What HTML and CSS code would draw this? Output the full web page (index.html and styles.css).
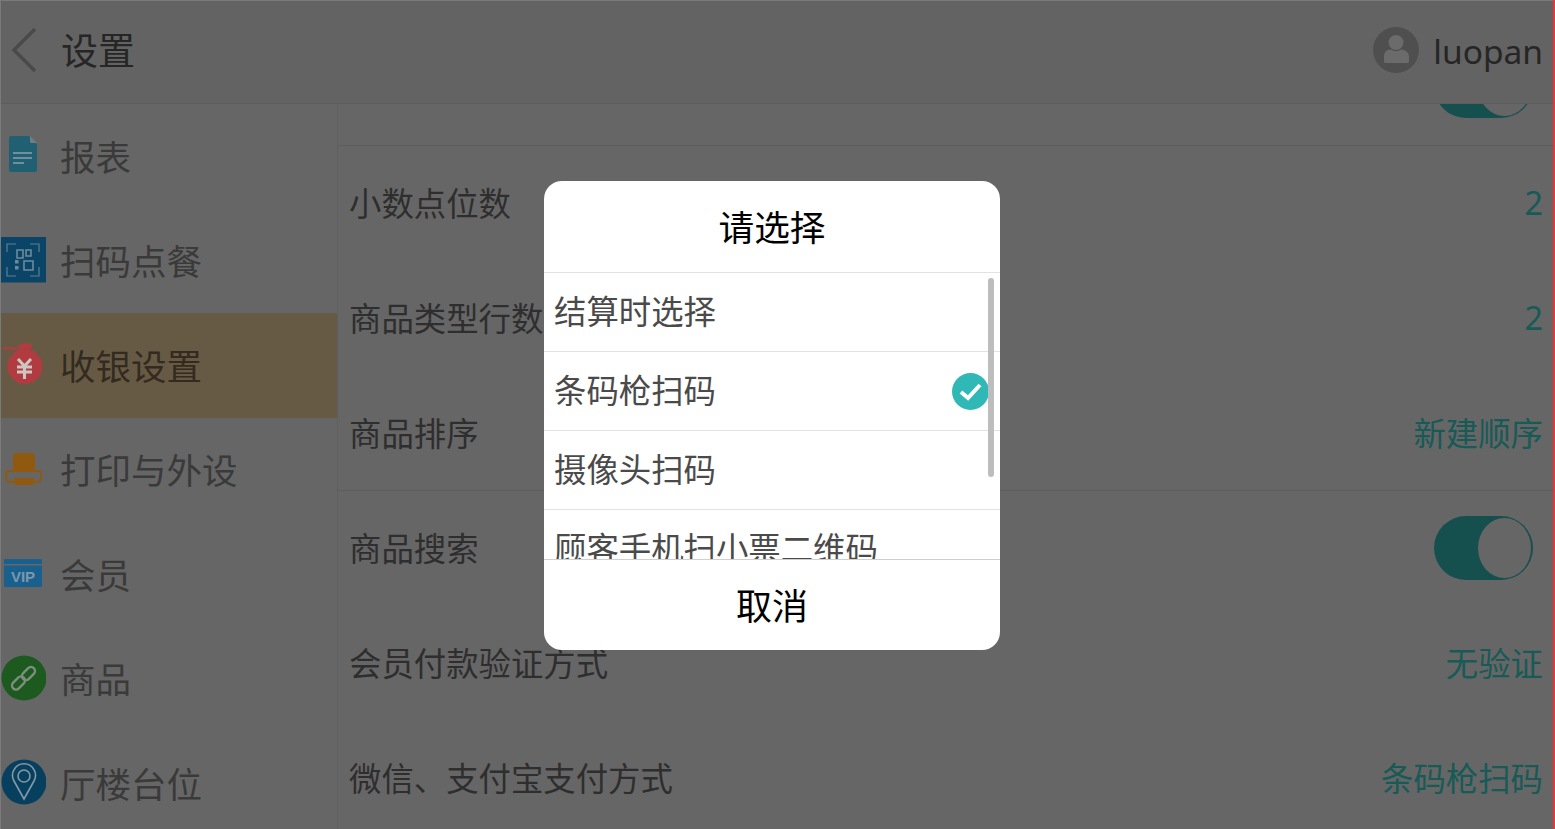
FILE: index.html
```html
<!DOCTYPE html>
<html lang="zh-CN">
<head>
    <meta charset="UTF-8">
    <meta name="viewport" content="width=device-width, initial-scale=1.0">
    <title>设置</title>
    <link rel="stylesheet" href="styles.css">
</head>
<body>
    <div class="app">
        <!-- Top bar -->
        <header class="topbar">
            <svg class="back-icon" viewBox="0 0 26 46"><path d="M24 2 L3 23 L24 44" fill="none" stroke="#4a4a4a" stroke-width="3.4"/></svg>
            <div class="topbar-title">设置</div>
            <svg class="avatar" viewBox="0 0 46 46">
                <circle cx="23" cy="23" r="23" fill="#4f4f4f"/>
                <circle cx="23" cy="15.5" r="7.5" fill="#6b6b6b"/>
                <path d="M11 35 V29 Q11 23 18 22.5 Q23 26 28 22.5 Q35 23 36 29 V35 Q36 36 34 36 H13 Q11 36 11 35 Z" fill="#6b6b6b"/>
            </svg>
            <div class="topbar-user">luopan</div>
        </header>

        <div class="body-row">
            <!-- Left menu -->
            <nav class="sidebar">
                <div class="menu-item">
                    <svg class="menu-icon" viewBox="0 0 46 46">
                        <path d="M11 4 H29 L37 12 V38 Q37 40 35 40 H11 Q9 40 9 38 V6 Q9 4 11 4 Z" fill="#215f72"/>
                        <path d="M30 4 L37 11 H31 Q30 11 30 10 Z" fill="#6b7f86"/>
                        <path d="M13 21 H32 M13 26 H32 M13 31 H24" stroke="#6f8f9c" stroke-width="1.8"/>
                    </svg>
                    <span>报表</span>
                </div>
                <div class="menu-item">
                    <svg class="menu-icon" viewBox="0 0 46 46">
                        <rect x="1" y="0" width="45" height="45.5" fill="#0a4568"/>
                        <path d="M7 15 V7 H16 M30 7 H39 V15 M39 30 V39 H30 M16 39 H7 V30" fill="none" stroke="#5f7f90" stroke-width="1.2"/>
                        <path d="M17 13 H23 V21 H17 Z M26 13 H31 V19 H26 Z M24 24 H33 V33 H24 Z" fill="none" stroke="#6f8a9a" stroke-width="1.6"/>
                        <rect x="15" y="23" width="3.5" height="3.5" fill="#6f8a9a"/>
                        <rect x="15" y="29" width="3.5" height="3.5" fill="#6f8a9a"/>
                    </svg>
                    <span>扫码点餐</span>
                </div>
                <div class="menu-item menu-item-active">
                    <svg class="menu-icon" viewBox="0 0 46 46">
                        <path d="M18 4 Q25 1 32 3 Q33 6 29 9 H20 Q18 7 18 4 Z" fill="#b03c42"/>
                        <path d="M19 8 Q10 4 2 7 Q3 9 5 8.5 Q11 7 17 10 Z" fill="#b03c42"/>
                        <circle cx="25" cy="25.5" r="17.5" fill="#b03c42"/>
                        <path d="M18 18 L24.5 25 L31 18 M17 26 H32 M17 31 H32 M24.5 25 V38" fill="none" stroke="#cfc6c0" stroke-width="3"/>
                    </svg>
                    <span>收银设置</span>
                </div>
                <div class="menu-item">
                    <svg class="menu-icon" viewBox="0 0 46 46">
                        <path d="M13 11 Q13 7 17 7 H31 Q35 7 35 11 V24 H13 Z" fill="#8f5a0f"/>
                        <path d="M9 25 H39 Q41 25 41 28 V31 Q41 36 37 36 H10 Q6 36 6 31 V28 Q6 25 9 25 Z" fill="none" stroke="#8f5a0f" stroke-width="2"/>
                        <path d="M14 32 H34 V37 Q34 39 32 39 H16 Q14 39 14 37 Z" fill="#8f5a0f"/>
                    </svg>
                    <span>打印与外设</span>
                </div>
                <div class="menu-item">
                    <svg class="menu-icon" viewBox="0 0 46 46">
                        <path d="M4 10 Q4 9 6 9 H41 Q42 9 42 10 V14 H4 Z" fill="#19608f"/>
                        <path d="M4 15.5 H42 V36 Q42 37 41 37 H5 Q4 37 4 36 Z" fill="#19608f"/>
                        <text x="23" y="32" class="vip-text">VIP</text>
                    </svg>
                    <span>会员</span>
                </div>
                <div class="menu-item">
                    <svg class="menu-icon" viewBox="0 0 46 46">
                        <circle cx="24" cy="23" r="22.5" fill="#1d5a1f"/>
                        <g fill="none" stroke="#7d8e7d" stroke-width="2.4">
                            <rect x="11" y="24" width="15" height="8" rx="4" transform="rotate(-45 18.5 28)"/>
                            <rect x="21" y="14.5" width="15" height="8" rx="4" transform="rotate(-45 28.5 18.5)"/>
                        </g>
                    </svg>
                    <span>商品</span>
                </div>
                <div class="menu-item">
                    <svg class="menu-icon" viewBox="0 0 46 46">
                        <circle cx="24" cy="23" r="22.5" fill="#07405f"/>
                        <path d="M24 40 L14 22 A11.5 11.5 0 1 1 34 22 Z" fill="none" stroke="#8498a5" stroke-width="1.6"/>
                        <circle cx="24" cy="17" r="6" fill="none" stroke="#8498a5" stroke-width="1.6"/>
                    </svg>
                    <span>厅楼台位</span>
                </div>
            </nav>

            <!-- Settings list -->
            <main class="settings">
                <div class="settings-top">
                    <div class="switch switch-cut"><div class="switch-knob"></div></div>
                </div>
                <section class="settings-group">
                    <div class="setting-row"><span>小数点位数</span><span class="setting-value">2</span></div>
                    <div class="setting-row"><span>商品类型行数</span><span class="setting-value">2</span></div>
                    <div class="setting-row"><span>商品排序</span><span class="setting-value">新建顺序</span></div>
                </section>
                <section class="settings-group">
                    <div class="setting-row"><span>商品搜索</span><div class="switch"><div class="switch-knob"></div></div></div>
                    <div class="setting-row"><span>会员付款验证方式</span><span class="setting-value">无验证</span></div>
                    <div class="setting-row"><span>微信、支付宝支付方式</span><span class="setting-value">条码枪扫码</span></div>
                </section>
            </main>
        </div>

        <!-- Select dialog -->
        <div class="dialog">
            <div class="dialog-title">请选择</div>
            <div class="dialog-list">
                <div class="dialog-option">结算时选择</div>
                <div class="dialog-option">条码枪扫码
                    <svg class="check-icon" viewBox="0 0 37 37">
                        <circle cx="18.5" cy="18.5" r="18.5" fill="#2fb8b6"/>
                        <path d="M9 19 L16 25 L28 12" fill="none" stroke="#fff" stroke-width="4"/>
                    </svg>
                </div>
                <div class="dialog-option">摄像头扫码</div>
                <div class="dialog-option">顾客手机扫小票二维码</div>
                <div class="dialog-scrollbar"></div>
            </div>
            <div class="dialog-cancel">取消</div>
        </div>
    </div>
</body>
</html>
```

FILE: styles.css
```css
/* Page frame */
html, body {
    margin: 0;
    padding: 0;
    height: 100%;
    overflow: hidden;
}

body {
    background: #7a7a7a;
    border-right: 2px solid #e8353a;
    box-sizing: border-box;
    padding: 1px 0 0 1px;
    font-family: "Noto Sans", "Noto Sans CJK SC", sans-serif;
}

.app {
    position: relative;
    height: 100%;
    background: #666;
    display: flex;
    flex-direction: column;
    overflow: hidden;
}

/* Top bar */
.topbar {
    flex: none;
    height: 103px;
    box-sizing: border-box;
    padding: 0 10px 4px 10px;
    background: #636363;
    border-bottom: 1px solid #5d5d5d;
    display: flex;
    align-items: center;
}

.back-icon {
    width: 26px;
    height: 46px;
}

.topbar-title {
    margin-left: 24px;
    padding-bottom: 2px;
    font-size: 37px;
    color: #262626;
    flex: 1;
}

.avatar {
    width: 46px;
    height: 46px;
}

.topbar-user {
    margin-left: 14px;
    padding-top: 2px;
    font-size: 33.5px;
    color: #262626;
}

.body-row {
    flex: 1;
    display: flex;
    min-height: 0;
}

/* Left menu */
.sidebar {
    flex: none;
    width: 336px;
    border-right: 1px solid #5f5f5f;
}

.menu-item {
    height: 104.5px;
    box-sizing: border-box;
    padding-bottom: 2px;
    display: flex;
    align-items: center;
    font-size: 35.5px;
    color: #3a3a3a;
}

.menu-item-active {
    background: #665a45;
    color: #332b20;
}

.menu-icon {
    width: 46px;
    height: 46px;
    margin-left: -1px;
    margin-right: 14px;
    flex: none;
}

.vip-text {
    font-family: "Liberation Sans", sans-serif;
    font-size: 15px;
    font-weight: bold;
    fill: #7c98aa;
    text-anchor: middle;
}

/* Settings list */
.settings {
    flex: 1;
    min-width: 0;
}

.settings-top {
    position: relative;
    height: 41px;
    overflow: hidden;
    border-bottom: 1px solid #5d5d5d;
}

.settings-group {
    border-bottom: 1px solid #5d5d5d;
}

.setting-row {
    height: 114.7px;
    box-sizing: border-box;
    padding: 0 10px 3px 11px;
    display: flex;
    align-items: center;
    justify-content: space-between;
    font-size: 32.4px;
    color: #2e2e2e;
}

.setting-value {
    color: #175a56;
}

/* Switch */
.switch {
    width: 99px;
    height: 64px;
    margin-right: 10px;
    margin-top: 3px;
    box-sizing: border-box;
    padding: 2px;
    border-radius: 32px;
    background: #16504e;
    display: flex;
    justify-content: flex-end;
}

.switch-knob {
    width: 53px;
    height: 60px;
    border-radius: 50%;
    background: #666;
}

.switch-cut {
    position: absolute;
    right: 10px;
    bottom: 27px;
}

/* Select dialog */
.dialog {
    position: absolute;
    left: 543px;
    top: 180px;
    width: 456px;
    height: 469px;
    background: #fff;
    border-radius: 18px;
    overflow: hidden;
    display: flex;
    flex-direction: column;
}

.dialog-title {
    flex: none;
    height: 91px;
    line-height: 92px;
    text-align: center;
    font-size: 35.7px;
    color: #000;
    border-bottom: 1px solid #e2e2e2;
}

.dialog-list {
    position: relative;
    flex: none;
    height: 286px;
    overflow: hidden;
    border-bottom: 1px solid #cfcfcf;
}

.dialog-option {
    position: relative;
    height: 79px;
    box-sizing: border-box;
    padding-left: 10px;
    line-height: 77px;
    font-size: 32.4px;
    color: #4a4a4a;
    border-bottom: 1px solid #e2e2e2;
}

.check-icon {
    position: absolute;
    right: 11px;
    top: 21px;
    width: 37px;
    height: 37px;
}

.dialog-scrollbar {
    position: absolute;
    right: 6px;
    top: 5px;
    width: 6px;
    height: 199px;
    border-radius: 3px;
    background: #bdbdbd;
}

.dialog-cancel {
    flex: 1;
    display: flex;
    align-items: center;
    justify-content: center;
    padding-bottom: 2px;
    font-size: 36px;
    color: #000;
}
```
